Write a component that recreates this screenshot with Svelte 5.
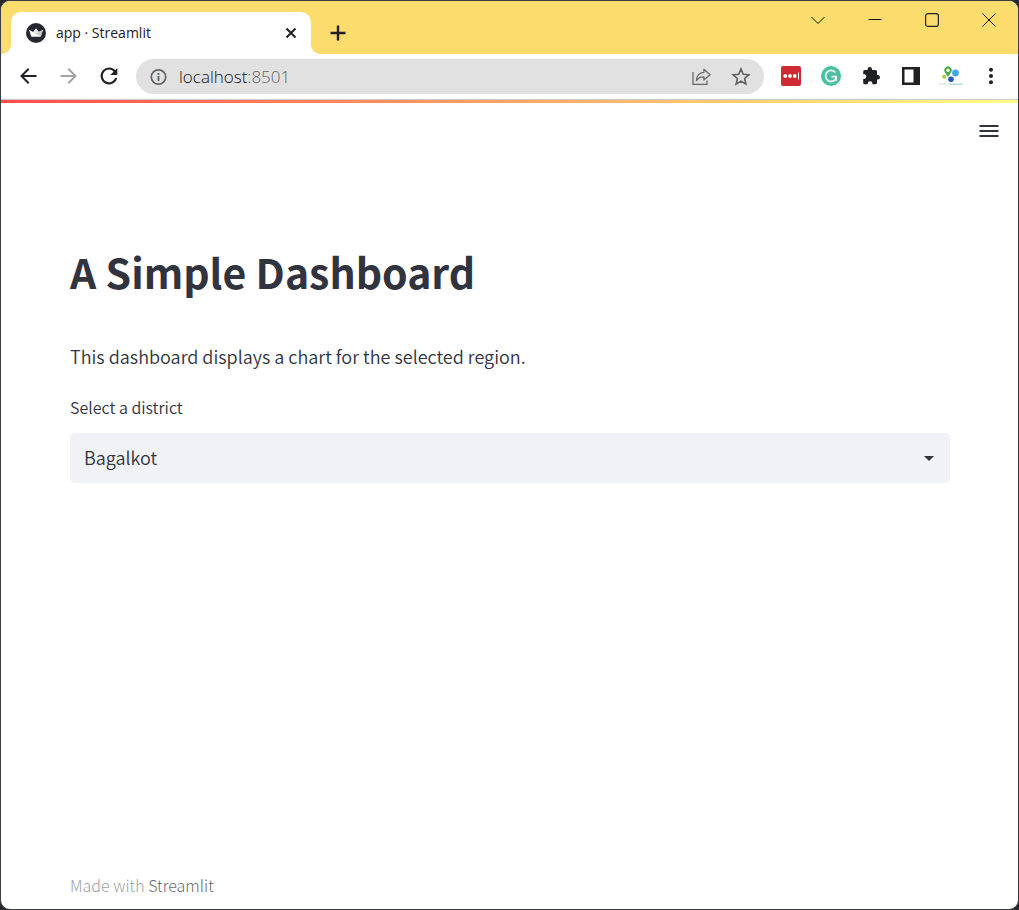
<script>
  let district = $state('Bagalkot');
  const districts = ['Bagalkot'];
</script>

<div class="window">
  <header class="titlebar">
    <div class="tab">
      <svg width="20" height="20" viewBox="0 0 20 20" aria-hidden="true">
        <circle cx="10" cy="10" r="10" fill="#262730" />
        <path d="M3 6.7 7.2 9 10 5.6 12.8 9 17 6.7 14.8 13.2Q14.6 13.8 14 13.8H6Q5.400 13.800 5.200 13.200Z" fill="#fff" />
        <path d="M12.800 9 17 6.700 15 13 8.500 10.500Z" fill="#c9c9cb" />
        <path d="M7.200 9 10 5.600 12.800 9 10 11Z" fill="#e6e6e8" />
      </svg>
      <span class="tab-title">app · Streamlit</span>
      <button class="icon" aria-label="Close tab">
        <svg width="12" height="12" viewBox="0 0 12 12"><path d="M1.500 1.500 10.500 10.500M10.500 1.500 1.500 10.500" stroke="#202124" stroke-width="2" /></svg>
      </button>
    </div>
    <button class="icon new-tab" aria-label="New tab">
      <svg width="16" height="16" viewBox="0 0 16 16"><path d="M8 .5V15.500M.5 8H15.500" stroke="#202124" stroke-width="2.400" /></svg>
    </button>
    <div class="window-controls">
      <button class="icon" aria-label="Search tabs">
        <svg width="14" height="14" viewBox="0 0 14 14"><path d="M.5 4 7 10.500 13.500 4" fill="none" stroke="#111" /></svg>
      </button>
      <button class="icon" aria-label="Minimize">
        <svg width="14" height="14" viewBox="0 0 14 14"><path d="M.5 6.500H13.500" stroke="#111" /></svg>
      </button>
      <button class="icon" aria-label="Maximize">
        <svg width="14" height="14" viewBox="0 0 14 14"><rect x=".6" y=".6" width="12.800" height="12.800" rx="2.500" fill="none" stroke="#222" stroke-width="1.200" /></svg>
      </button>
      <button class="icon" aria-label="Close">
        <svg width="14" height="14" viewBox="0 0 14 14"><path d="M.5 .5 13.500 13.500M13.500 .5 .5 13.500" stroke="#111" /></svg>
      </button>
    </div>
  </header>

  <nav class="toolbar" aria-label="Browser">
    <div class="nav-buttons">
      <button class="icon" aria-label="Back">
        <svg width="20" height="20" viewBox="0 0 20 20"><path d="M17.500 10H3M9.700 2.800 2.500 10 9.700 17.200" fill="none" stroke="#202124" stroke-width="2" /></svg>
      </button>
      <button class="icon" aria-label="Forward">
        <svg width="20" height="20" viewBox="0 0 20 20"><path d="M1.500 10H16.500M9.300 2.800 16.500 10 9.300 17.200" fill="none" stroke="#a3a3a3" stroke-width="2" /></svg>
      </button>
      <button class="icon" aria-label="Reload">
        <svg width="20" height="20" viewBox="0 0 20 20"><path d="M16 5.500A7.400 7.400 0 1 0 17.200 12" fill="none" stroke="#202124" stroke-width="2.100" /><path d="M18.300 2V9H11.300Z" fill="#202124" /></svg>
      </button>
    </div>
    <div class="omnibox">
      <svg width="18" height="18" viewBox="0 0 18 18" aria-hidden="true"><circle cx="9.500" cy="9" r="7.200" fill="none" stroke="#5f6368" stroke-width="1.700" /><path d="M9.500 8V13M9.500 5V6.800" stroke="#5f6368" stroke-width="1.900" /></svg>
      <a class="address" href="http://localhost:8501">localhost<span>:8501</span></a>
      <button class="icon" aria-label="Share">
        <svg width="20" height="20" viewBox="0 0 20 20" fill="none" stroke="#6a6a6a" stroke-width="1.300"><path d="M2 5V17.400H16V13.500" /><path d="M12.900 2.200 19.100 7.700 12.900 13V9.900C9.400 9.700 7.200 11 5.400 13.700 5.600 9 8.200 5.900 12.900 5.400Z" stroke-linejoin="round" /></svg>
      </button>
      <button class="icon" aria-label="Bookmark this page">
        <svg width="20" height="20" viewBox="0 0 20 20"><path d="M10 2 12.200 7.300 17.900 7.800 13.600 11.500 14.900 17.100 10 14.100 5.100 17.100 6.400 11.500 2.100 7.800 7.800 7.300Z" fill="none" stroke="#5f6062" stroke-width="1.600" /></svg>
      </button>
    </div>
    <div class="extensions">
      <button class="icon" aria-label="Password manager">
        <svg width="20" height="20" viewBox="0 0 20 20"><rect width="20" height="20" rx="2" fill="#cf2a31" /><g fill="#fff"><circle cx="4.300" cy="10" r="1.900" /><circle cx="9" cy="10" r="1.900" /><circle cx="13.700" cy="10" r="1.900" /><path d="M17 6.500H18V13.500H17Z" /></g></svg>
      </button>
      <button class="icon" aria-label="Writing assistant">
        <svg width="20" height="20" viewBox="0 0 20 20"><circle cx="10" cy="10" r="10" fill="#46c2a0" /><path d="M14.400 6.500A5.500 5.500 0 1 0 15 12.500" fill="none" stroke="#fff" stroke-width="1.700" /><path d="M10.500 10.700H15.200V14.500" fill="none" stroke="#fff" stroke-width="1.700" /></svg>
      </button>
      <button class="icon" aria-label="Extensions">
        <svg width="20" height="20" viewBox="0 0 20 20"><path d="M16.800 9H16V5.500Q16 4 14.500 4H11V3.200A2.200 2.200 0 0 0 6.600 3.200V4H3.700Q2.200 4 2.200 5.500V8.200H3A2.300 2.300 0 0 1 3 13H2.200V16.800Q2.200 18.300 3.700 18.300H6.700V17.500A2.300 2.300 0 0 1 11.400 17.500V18.300H14.500Q16 18.300 16 16.800V13.400H16.800A2.200 2.200 0 0 0 16.800 9Z" fill="#202124" /></svg>
      </button>
      <button class="icon" aria-label="Side panel">
        <svg width="20" height="20" viewBox="0 0 20 20"><path d="M1 1H19V19H1ZM3.500 3.500V16.500H12.500V3.500Z" fill="#202124" fill-rule="evenodd" /></svg>
      </button>
      <button class="icon profile" aria-label="Profile">
        <svg width="24" height="20" viewBox="0 0 24 20"><path d="M9 11 5.900 6.200A3.700 3.700 0 1 1 12.100 6.200Z" fill="#4aa846" /><circle cx="9" cy="4.300" r="1.700" fill="#fff" /><circle cx="16.500" cy="7" r="3.400" fill="#3eaaea" /><circle cx="5.200" cy="10.800" r="2" fill="#a4cf3a" /><circle cx="12" cy="13.200" r="2.800" fill="#2558b8" /><path d="M.2 17.800H11" stroke="#c6e4d0" stroke-width="1.300" stroke-dasharray="2 .5" /><path d="M11 18.200H23.500" stroke="#a6d0ea" stroke-width="1.600" stroke-dasharray="2.500 .4" /></svg>
      </button>
      <button class="icon" aria-label="Browser menu">
        <svg width="20" height="20" viewBox="0 0 20 20" fill="#202124"><circle cx="10" cy="3.700" r="2" /><circle cx="10" cy="10" r="2" /><circle cx="10" cy="16.300" r="2" /></svg>
      </button>
    </div>
  </nav>

  <div class="page">
    <div class="decoration"></div>
    <div class="app-header">
      <button class="icon" aria-label="Main menu">
        <svg width="20" height="14" viewBox="0 0 20 14"><path d="M.5 2H19.500M.5 7H19.500M.5 12H19.500" stroke="#31333f" stroke-width="2" /></svg>
      </button>
    </div>
    <main>
      <h1>A Simple Dashboard</h1>
      <p>This dashboard displays a chart for the selected region.</p>
      <label for="district">Select a district</label>
      <div class="select">
        <select id="district" bind:value={district}>
          {#each districts as name}
            <option>{name}</option>
          {/each}
        </select>
        <svg width="10" height="5" viewBox="0 0 10 5" aria-hidden="true"><path d="M0 0H10L5 5Z" fill="#31333f" /></svg>
      </div>
    </main>
    <footer>Made with <a href="https://streamlit.io">Streamlit</a></footer>
  </div>
</div>

<style>
  :global(body) {
    margin: 0;
    background: #25292e;
  }

  .window {
    box-sizing: border-box;
    min-height: 100vh;
    display: flex;
    flex-direction: column;
    border: 1px solid #3a3e44;
    border-radius: 10px;
    overflow: hidden;
    background: #fff;
    font-family: "Open Sans", sans-serif;
  }

  .icon {
    display: grid;
    place-items: center;
    flex: none;
    padding: 0;
    border: 0;
    background: none;
  }

  svg {
    display: block;
  }

  .titlebar {
    display: flex;
    height: 53px;
    padding-left: 10px;
    background: #fbdc6c;
  }

  .tab {
    position: relative;
    box-sizing: border-box;
    display: flex;
    align-items: center;
    gap: 10px;
    width: 300px;
    margin-top: 11px;
    padding: 0 14px 0 15px;
    border-radius: 10px 10px 0 0;
    background: #fff;
  }

  .tab::before,
  .tab::after {
    content: "";
    position: absolute;
    bottom: 0;
    width: 10px;
    height: 10px;
  }

  .tab::before {
    right: 100%;
    background: radial-gradient(circle at 0 0, #fbdc6c 10px, #fff 10px);
  }

  .tab::after {
    left: 100%;
    background: radial-gradient(circle at 100% 0, #fbdc6c 10px, #fff 10px);
  }

  .tab-title {
    flex: 1;
    padding-bottom: 2px;
    color: #202124;
    font-size: 14px;
  }

  .new-tab {
    width: 32px;
    margin: 10px 0 0 11px;
  }

  .window-controls {
    display: flex;
    height: 37px;
    margin-left: auto;
    padding-right: 1px;
  }

  .window-controls .icon {
    width: 57px;
  }

  .toolbar {
    display: flex;
    align-items: center;
    height: 45px;
    border-bottom: 1px solid #c8cacd;
  }

  .nav-buttons {
    display: flex;
    gap: 20px;
    padding: 0 17px 2px 18px;
  }

  .omnibox {
    box-sizing: border-box;
    flex: 1;
    display: flex;
    align-items: center;
    gap: 20px;
    height: 35px;
    margin-right: 17px;
    padding: 0 13px;
    border-radius: 18px;
    background: #e1e1e1;
  }

  .address {
    flex: 1;
    margin-left: -8px;
    color: #111216;
    font-size: 17px;
    font-weight: 300;
    text-decoration: none;
  }

  .address span {
    color: #5f6368;
  }

  .extensions {
    display: flex;
    gap: 20px;
    padding: 0 17px 2px 0;
  }

  .extensions .icon {
    width: 20px;
  }

  .extensions .profile {
    justify-content: center;
  }

  .page {
    flex: 1;
    display: flex;
    flex-direction: column;
    color: #31333f;
    font-family: "Noto Sans CJK JP", sans-serif;
    font-weight: 350;
  }

  .decoration {
    height: 3px;
    background: linear-gradient(90deg, #ff4b4b, #fffd80);
  }

  .app-header {
    display: flex;
    justify-content: flex-end;
    padding: 21px 19px;
  }

  main {
    flex: 1;
    padding: 79px 68px 0 69px;
  }

  h1 {
    margin: 0;
    font-size: 41px;
    font-weight: 700;
    line-height: 66px;
  }

  p {
    margin: 36px 0 20px;
    font-size: 18px;
    line-height: 32px;
  }

  label {
    display: block;
    font-size: 16px;
    line-height: 30px;
  }

  .select {
    display: grid;
    align-items: center;
    margin-top: 11px;
  }

  .select > * {
    grid-area: 1 / 1;
  }

  .select svg {
    justify-self: end;
    margin-right: 16px;
    pointer-events: none;
  }

  select {
    appearance: none;
    width: 100%;
    height: 50px;
    padding: 0 14px 2px;
    border: 0;
    border-radius: 5px;
    background: #f0f2f6;
    color: inherit;
    font: inherit;
    font-size: 18px;
  }

  footer {
    padding: 0 69px 10px;
    color: #a0a1a6;
    font-size: 16px;
    font-weight: 300;
    line-height: 28px;
  }

  footer a {
    color: #666870;
    text-decoration: none;
  }
</style>
